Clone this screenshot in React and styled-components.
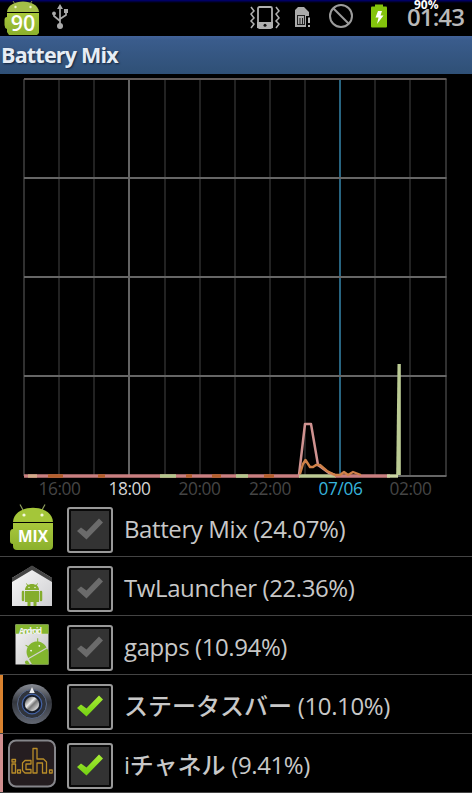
import React from 'react';
import styled, { createGlobalStyle } from 'styled-components';

const GlobalStyle = createGlobalStyle`
  body {
    margin: 0;
    background: #000;
    overflow: hidden;
  }
`;

const Screen = styled.div`
  width: 472px;
  height: 793px;
  overflow: hidden;
  background: #000;
  font-family: 'Open Sans', 'Noto Sans CJK JP', sans-serif;
  color: #c8c8c8;
`;

const StatusBar = styled.div`
  height: 36px;
  display: flex;
  background: linear-gradient(#000078 0, #000050 1px, #000 3px);

  svg {
    display: block;
    flex: none;
  }
`;

const ClockBox = styled.div`
  position: relative;
  width: 76px;
`;

const Clock = styled.div`
  padding-left: 11px;
  font-size: 24px;
  font-weight: 600;
  line-height: 34px;
  letter-spacing: -0.9px;
  color: #b9b9b9;
  white-space: nowrap;
`;

const Percent = styled.div`
  position: absolute;
  left: 18px;
  top: -4px;
  font-size: 12px;
  line-height: 17px;
  font-weight: 700;
  color: #fff;
  text-shadow: 0 0 2px #000;
`;

const TitleBar = styled.div`
  height: 38px;
  box-sizing: border-box;
  padding-left: 1px;
  background: linear-gradient(#43639a 0, #3a5c8c 4px, #2f5076 100%);
  color: #e6edf5;
  font-size: 21.5px;
  font-weight: 700;
  line-height: 37px;
  letter-spacing: -0.8px;
  text-shadow: 1px 1px 2px #14233a;
`;

const ChartArea = styled.div`
  height: 424px;

  svg {
    display: block;
  }

  text {
    font-size: 17.3px;
    letter-spacing: -0.4px;
    text-anchor: middle;
  }
`;

const Row = styled.div`
  height: 59px;
  box-sizing: border-box;
  display: flex;
  border-bottom: 1px solid #444;

  svg {
    display: block;
    flex: none;
  }
`;

const Stripe = styled.div`
  width: 3px;
  background: ${props => props.color || 'transparent'};
`;

const IconBox = styled.div`
  width: 64px;
`;

const CheckBox = styled.div`
  margin-top: 9px;
  width: 46px;
  height: 46px;
  box-sizing: border-box;
  border: 2px solid #999;
  border-radius: 3px;
  background: #333;
  box-shadow: inset 0 0 0 2px #080808;
`;

const Label = styled.div`
  padding-left: 11px;
  font-size: 24px;
  line-height: 62px;
  letter-spacing: -0.4px;
  white-space: nowrap;

  span {
    font-family: 'Noto Sans CJK JP', sans-serif;
    font-weight: 500;
    line-height: 1;
    letter-spacing: 0;
  }
`;

const IconText = styled.text`
  font-family: 'Open Sans', sans-serif;
  font-weight: ${props => props.weight || 700};
`;

function Icons() {
    return (
        <svg width="396" height="36" viewBox="0 0 396 36">
            <defs>
                <linearGradient id="droid" x1="0" y1="0" x2="0" y2="1">
                    <stop offset="0" stopColor="#a9c83c" />
                    <stop offset="1" stopColor="#8bb02c" />
                </linearGradient>
            </defs>
            {/* battery level droid */}
            <path d="M7 12 C8 -2 38 -2 39 12 Z" fill="#a4bf48" />
            <path d="M15 4 L13 1 M30 4 L32 1" stroke="#8d9d50" />
            <circle cx="15.5" cy="7" r="1.2" fill="#eef5d0" />
            <circle cx="30.5" cy="7" r="1.2" fill="#eef5d0" />
            <path d="M7 13 H39 V33 L37 35 H9 L7 32 V29 Q4.5 28 4.5 25 V20 Q4.5 17 7 17 Z" fill="url(#droid)" />
            <IconText x="23" y="31" fontSize="21.5" weight={600} textAnchor="middle" fill="#fff">90</IconText>
            {/* usb */}
            <g fill="none" stroke="#aaa" strokeWidth="1.7">
                <path d="M60 25 V7 M54 14 V16 L60 21 M66 12 V15 L60 19" />
                <path d="M60 4 L57 9 H63 Z" fill="#aaa" stroke="none" />
                <circle cx="60" cy="26" r="3" fill="#aaa" stroke="none" />
                <circle cx="54" cy="13.5" r="1.9" fill="#aaa" stroke="none" />
                <path d="M64 9 H68 V13 H64 Z" fill="#aaa" stroke="none" />
            </g>
            {/* vibrate */}
            <g fill="none" stroke="#b0b0b0" strokeWidth="1.8">
                <rect x="258" y="7" width="14" height="21" rx="1.5" />
                <path d="M251 7 L254 11 L251 14 L254 18 L251 21 L254 24 L251 28" strokeWidth="1.5" />
                <path d="M276 7 L279 11 L276 14 L279 18 L276 21 L279 24 L276 28" strokeWidth="1.5" />
                <path d="M257 22 H273 V28 H257 Z" fill="#b0b0b0" stroke="none" />
                <circle cx="265" cy="25.2" r="1.5" fill="#111" stroke="none" />
            </g>
            {/* sim */}
            <path d="M295 10 L298 7 H304 L309 12 V16 H306 V27 H295 Z" fill="#aaa" />
            <path d="M297.5 15.5 H304.5 M297.5 24.5 H304.5 M297.5 15 V25 M300 18 V24 M302.5 18 V24 M304.5 15 V25" stroke="#222" strokeWidth="1" />
            <path d="M309 17.5 V23 M309 25 V27" stroke="#bbb" strokeWidth="2" />
            {/* silent */}
            <circle cx="341" cy="16" r="11" fill="none" stroke="#9c9c9c" strokeWidth="2" />
            <path d="M333 8 L349 24" stroke="#9c9c9c" strokeWidth="2" />
            {/* charging */}
            <rect x="371" y="6.5" width="16" height="21" rx="1" fill="#84c40c" />
            <rect x="375" y="4.5" width="8" height="3" fill="#84c40c" />
            <path d="M378 11 H382 L380.5 15.5 H383.5 L377 24 L378.5 17.5 H375.5 Z" fill="#fff" />
        </svg>
    );
}

const hours = [0, 1, 2, 3, 4, 5, 6, 7, 8, 9, 10, 11, 12];
const ticks = [
    { x: 59.5, text: '16:00', color: '#454545' },
    { x: 129.5, text: '18:00', color: '#d5d5d5' },
    { x: 199.5, text: '20:00', color: '#454545' },
    { x: 270, text: '22:00', color: '#454545' },
    { x: 340.5, text: '07/06', color: '#37b4dc' },
    { x: 410.5, text: '02:00', color: '#454545' },
];

function lineColor(i) {
    if (i === 3) return '#646464';
    if (i === 9) return '#286480';
    if (i === 0 || i === 12) return '#303030';
    return '#222';
}

function Chart() {
    return (
        <ChartArea>
            <svg width="472" height="424" viewBox="0 74 472 424">
                {hours.map(i => (
                    <path key={i} d={`M${Math.round(24 + i * 35.13)} 79 V476`} stroke={lineColor(i)} strokeWidth="2" />
                ))}
                {[79, 178, 277, 376, 476].map(y => (
                    <path key={y} d={`M24 ${y} H446.5`} stroke={y === 79 ? '#625b59' : '#666'} strokeWidth="2" />
                ))}
                <g fill="none" strokeWidth="3.4">
                    <path d="M24 476 H300" stroke="#c97f80" />
                    <path d="M28 476 H37" stroke="#d2ab88" />
                    <path d="M48 476 H63 M98 476 H105 M186 476 H192 M212 476 H221 M264 476 H274" stroke="#b5602c" />
                    <path d="M160 476 H176 M236 476 H248" stroke="#b4c78d" />
                    <path d="M299 476 H336" stroke="#bcca94" />
                    <path d="M335 476 H390" stroke="#c97f80" />
                    <path d="M299 475 L305 424 H311 L318 465 L329 473 L335 475" stroke="#cf9290" strokeWidth="2.5" strokeLinejoin="round" />
                    <path d="M300 474 L303 464 L305.5 460 L310 467 L313 467 L316 465 L320 465 L327 471 L335 475 L340 475 L344 472 L348 475 L353 472 L361 475" stroke="#cf8148" strokeWidth="2.4" strokeLinejoin="round" />
                    <path d="M387 476 H398" stroke="#cbd5a3" />
                    <path d="M397.5 364 H400.8 L400.8 475 H396.2 Z" fill="#bbcb94" stroke="none" />
                </g>
                {ticks.map(t => (
                    <text key={t.text} x={t.x} y="495" fill={t.color}>{t.text}</text>
                ))}
            </svg>
        </ChartArea>
    );
}

function MixIcon() {
    return (
        <svg width="56" height="58" viewBox="3 0 56 58">
            <path d="M23 12 L20 6.5 M42 12 L45 6.5" stroke="#8c9a5c" strokeWidth="1.2" />
            <path d="M13 24 C14 5 52 5 53 24 Z" fill="#a4c639" />
            <circle cx="24" cy="17" r="1.6" fill="#f2f7dc" />
            <circle cx="42" cy="17" r="1.6" fill="#f2f7dc" />
            <path d="M13 25 H53 V48 Q53 52 49 52 H17 Q13 52 13 48 V46 Q10 46 10 43 V35 Q10 31 13 31 Z" fill="url(#droid)" />
            <IconText x="33" y="44" fontSize="16.5" textAnchor="middle" textLength="30" lengthAdjust="spacingAndGlyphs" fill="#fff">MIX</IconText>
        </svg>
    );
}

function HomeIcon() {
    return (
        <svg width="56" height="58" viewBox="3 0 56 58">
            <defs>
                <linearGradient id="wall" x1="0" y1="0" x2="1" y2="1">
                    <stop offset="0" stopColor="#fafafa" />
                    <stop offset="1" stopColor="#cfcfd2" />
                </linearGradient>
            </defs>
            <path d="M12 21 L32 9 L52 21 V49 H12 Z" fill="url(#wall)" />
            <path d="M12 25 V21 L32 8.5 L52 21 V25 L32 13 Z" fill="#454545" />
            <g fill="#84ad2c">
                <path d="M25 33 C25 25 39 25 39 33 Z" />
                <path d="M25 34 H39 V45 H36.5 V49 H33.5 V45 H30.5 V49 H27.5 V45 H25 Z" />
                <path d="M23 35 V43 M41 35 V43" stroke="#84ad2c" strokeWidth="2.5" strokeLinecap="round" />
                <path d="M28 29 L26.5 26.5 M36 29 L37.5 26.5" stroke="#84ad2c" />
            </g>
            <circle cx="29" cy="30.5" r="0.7" fill="#fff" />
            <circle cx="35" cy="30.5" r="0.7" fill="#fff" />
        </svg>
    );
}

function GappsIcon() {
    return (
        <svg width="56" height="58" viewBox="3 0 56 58">
            <defs>
                <linearGradient id="paper" x1="0" y1="0" x2="1" y2="1">
                    <stop offset="0" stopColor="#f4f4f4" />
                    <stop offset="1" stopColor="#c4c4c4" />
                </linearGradient>
                <clipPath id="sheet"><path d="M15.5 8.5 H48.5 V48.5 H15.5 Z" /></clipPath>
            </defs>
            <path d="M15.5 8.5 H48.5 V48.5 H15.5 Z" fill="url(#paper)" />
            <path d="M15.5 8.5 H48.5 V17.7 H15.5 Z" fill="#85b62f" />
            <IconText x="30.5" y="17.5" fontSize="8" textAnchor="middle" textLength="23" fill="#f4f4f4">Android</IconText>
            <g clipPath="url(#sheet)">
                <g transform="rotate(-30 37 37)" fill="#82b52e">
                    <path d="M27 37 C27 22 48 22 48 37 Z" />
                    <path d="M27 38.2 H48 V56 H27 Z" />
                    <path d="M23.5 40 V48" stroke="#82b52e" strokeWidth="3.5" strokeLinecap="round" />
                    <path d="M33 28 L31 24.5 M43 28 L45 24.5" stroke="#82b52e" />
                    <circle cx="33" cy="32" r="0.9" fill="#fff" />
                    <circle cx="42.5" cy="32" r="0.9" fill="#fff" />
                </g>
            </g>
        </svg>
    );
}

function DialIcon() {
    return (
        <svg width="56" height="58" viewBox="3 0 56 58">
            <defs>
                <linearGradient id="ring" x1="0" y1="0" x2="0" y2="1">
                    <stop offset="0" stopColor="#878b94" />
                    <stop offset="0.45" stopColor="#33363d" />
                    <stop offset="1" stopColor="#626772" />
                </linearGradient>
                <linearGradient id="knob" x1="0" y1="0" x2="1" y2="1">
                    <stop offset="0.1" stopColor="#555" />
                    <stop offset="0.4" stopColor="#eee" />
                    <stop offset="0.55" stopColor="#777" />
                    <stop offset="0.8" stopColor="#ccc" />
                    <stop offset="1" stopColor="#444" />
                </linearGradient>
            </defs>
            <circle cx="32" cy="29" r="20" fill="url(#ring)" />
            <circle cx="32" cy="29" r="14.5" fill="#30343c" stroke="#59698a" strokeWidth="1" />
            <circle cx="32" cy="29" r="9.8" fill="#171d29" stroke="#4463a6" strokeWidth="1.2" />
            <circle cx="32" cy="29" r="7.2" fill="url(#knob)" />
            <path d="M32 12 L34.8 18 H29.2 Z" fill="#eee" />
        </svg>
    );
}

function ChannelIcon() {
    return (
        <svg width="56" height="58" viewBox="3 0 56 58">
            <rect x="9" y="6.5" width="46" height="46" rx="7" fill="#251d20" stroke="#85858a" strokeWidth="2" />
            <g fill="none" stroke="#b88c28" strokeWidth="1.3" strokeLinejoin="round">
                <path d="M12 25.5 H15.5 V28 H12 Z M12 30 H15.5 V39 H12 Z M17.5 36 H20.5 V39 H17.5 Z" />
                <path d="M31 26.5 H25 L22.5 29 V36.500 L25 39 H31 V35.500 H26 V30 H31 Z" />
                <path d="M33 14.5 H37 V25 H43.500 L46.500 28 V39 H42.500 V29 H37 V39 H33 Z" />
                <path d="M49.5 36 H52.2 V39 H49.5 Z" />
            </g>
        </svg>
    );
}

function Check({ on }) {
    return (
        <CheckBox>
            <svg width="42" height="42" viewBox="2 2 42 42">
                <defs>
                    <linearGradient id="tick" x1="0" y1="0" x2="0" y2="1">
                        <stop offset="0" stopColor="#a9ee35" />
                        <stop offset="1" stopColor="#72cf12" />
                    </linearGradient>
                </defs>
                <path d="M10 24 L14 20.5 L19.5 24.5 L32 11.5 L36 15.5 L19.5 32.5 Z" fill={on ? 'url(#tick)' : '#6b6b6b'} />
            </svg>
        </CheckBox>
    );
}

function App() {
    return (
        <Screen>
            <GlobalStyle />
            <StatusBar>
                <Icons />
                <ClockBox>
                    <Clock>01:43</Clock>
                    <Percent>90%</Percent>
                </ClockBox>
            </StatusBar>
            <TitleBar>Battery Mix</TitleBar>
            <Chart />
            <Row>
                <Stripe />
                <IconBox><MixIcon /></IconBox>
                <Check />
                <Label>Battery Mix (24.07%)</Label>
            </Row>
            <Row>
                <Stripe />
                <IconBox><HomeIcon /></IconBox>
                <Check />
                <Label>TwLauncher (22.36%)</Label>
            </Row>
            <Row>
                <Stripe />
                <IconBox><GappsIcon /></IconBox>
                <Check />
                <Label>gapps (10.94%)</Label>
            </Row>
            <Row>
                <Stripe color="#d9822f" />
                <IconBox><DialIcon /></IconBox>
                <Check on />
                <Label><span>ステータスバー</span> (10.10%)</Label>
            </Row>
            <Row>
                <Stripe color="#d08f8f" />
                <IconBox><ChannelIcon /></IconBox>
                <Check on />
                <Label>i<span>チャネル</span> (9.41%)</Label>
            </Row>
        </Screen>
    );
}

export default App;
